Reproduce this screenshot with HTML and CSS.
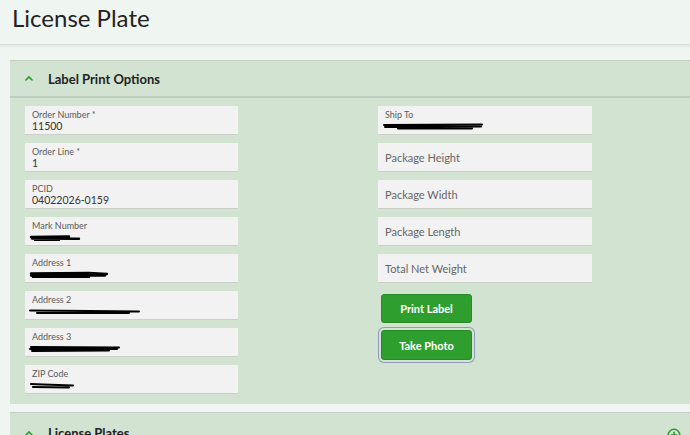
FILE: index.html
```html
<!DOCTYPE html>
<html lang="en">
<head>
    <meta charset="UTF-8">
    <meta name="viewport" content="width=device-width, initial-scale=1.0">
    <title>License Plate</title>
    <link rel="stylesheet" href="styles.css">
</head>
<body>
    <!-- Page header -->
    <header class="page-header">
        <h1>License Plate</h1>
    </header>

    <!-- Label print options -->
    <section class="panel">
        <div class="panel-header">
            <svg class="chevron" width="10" height="7" viewBox="0 0 10 7"><path d="M1.5 5.5 L5 2 L8.5 5.5" fill="none" stroke="#2a9a2a" stroke-width="1.6"/></svg>
            <span>Label Print Options</span>
        </div>
        <div class="panel-body">
            <div class="column">
                <div class="field">
                    <label>Order Number *</label>
                    <div class="value">11500</div>
                </div>
                <div class="field">
                    <label>Order Line *</label>
                    <div class="value">1</div>
                </div>
                <div class="field">
                    <label>PCID</label>
                    <div class="value">04022026-0159</div>
                </div>
                <div class="field">
                    <label>Mark Number</label>
                    <svg class="redact" width="56" height="7" viewBox="0 0 56 7"><path d="M2 3 L40 2.5 M3 4.5 L50 4.8 M6 6 L30 6" stroke="#000" stroke-width="2.4" stroke-linecap="round"/></svg>
                </div>
                <div class="field">
                    <label>Address 1</label>
                    <svg class="redact" width="82" height="7" viewBox="0 0 82 7"><path d="M2 2.5 L60 2 L78 3 M2 4.5 L76 4.5 M4 6 L60 6" stroke="#000" stroke-width="2.4" stroke-linecap="round"/></svg>
                </div>
                <div class="field">
                    <label>Address 2</label>
                    <svg class="redact" width="114" height="7" viewBox="0 0 114 7"><path d="M1 2.5 L60 3 L110 3.5 M8 5 L100 5" stroke="#000" stroke-width="2" stroke-linecap="round"/></svg>
                </div>
                <div class="field">
                    <label>Address 3</label>
                    <svg class="redact" width="94" height="7" viewBox="0 0 94 7"><path d="M2 2 L90 2.5 M1 4 L88 4 M3 6 L80 5.5" stroke="#000" stroke-width="2" stroke-linecap="round"/></svg>
                </div>
                <div class="field">
                    <label>ZIP Code</label>
                    <svg class="redact" width="48" height="7" viewBox="0 0 48 7"><path d="M2 2 L14 2.5 L44 3.5 M4 5 L40 5.5" stroke="#000" stroke-width="2.2" stroke-linecap="round"/></svg>
                </div>
            </div>

            <div class="column">
                <div class="field">
                    <label>Ship To</label>
                    <svg class="redact" width="104" height="7" viewBox="0 0 104 7"><path d="M2 2 L100 1.5 M3 4 L99 3.5 M16 5.5 L90 5.5" stroke="#000" stroke-width="2" stroke-linecap="round"/></svg>
                </div>
                <div class="field empty">Package Height</div>
                <div class="field empty">Package Width</div>
                <div class="field empty">Package Length</div>
                <div class="field empty">Total Net Weight</div>
                <div class="actions">
                    <button class="btn">Print Label</button>
                    <button class="btn focused">Take Photo</button>
                </div>
            </div>
        </div>
    </section>

    <!-- License plates -->
    <section class="panel">
        <div class="panel-header">
            <svg class="chevron" width="10" height="7" viewBox="0 0 10 7"><path d="M1.5 5.5 L5 2 L8.5 5.5" fill="none" stroke="#2a9a2a" stroke-width="1.6"/></svg>
            <span>License Plates</span>
            <svg class="add" width="14" height="14" viewBox="0 0 14 14"><circle cx="7" cy="7" r="5.8" fill="none" stroke="#2a9a2a" stroke-width="1.4"/><path d="M7 3.8 V10.2 M3.8 7 H10.2" stroke="#2a9a2a" stroke-width="1.6"/></svg>
        </div>
    </section>
</body>
</html>
```

FILE: styles.css
```css
/* Global */
body {
    margin: 0;
    font-family: 'Lato', 'Noto Sans', sans-serif;
    background: #eff5f1;
    color: #222;
    overflow: hidden;
}

/* Header */
.page-header {
    height: 44px;
    padding-left: 12px;
    border-bottom: 1px solid #d6dfd8;
    box-shadow: 0 2px 0 #e4ece6;
}

.page-header h1 {
    margin: 0;
    padding-top: 4px;
    font-size: 24px;
    font-weight: normal;
    line-height: 28px;
}

/* Panels */
.panel {
    margin: 15px 0 0 10px;
    background: #d2e3d1;
    border-top: 1px solid #c4cec4;
}

.panel + .panel {
    margin-top: 8px;
}

.panel-header {
    height: 35px;
    display: flex;
    align-items: center;
    padding-left: 14px;
    font-size: 13px;
    font-weight: bold;
    border-bottom: 2px solid #bfcfbf;
}

.panel + .panel .panel-header {
    height: 36px;
    border-bottom: none;
    align-items: flex-start;
    padding-top: 12px;
    box-sizing: border-box;
}

.panel + .panel .chevron {
    margin-top: 5px;
}

.chevron {
    margin-right: 14px;
}

.add {
    margin-left: auto;
    margin-right: 9px;
    margin-top: 3px;
}

.panel-body {
    display: grid;
    grid-template-columns: 213px 214px;
    column-gap: 140px;
    padding: 8px 0 10px 15px;
}

.column {
    display: flex;
    flex-direction: column;
    gap: 8px;
}

/* Fields */
.field {
    box-sizing: border-box;
    height: 29px;
    background: #f2f2f2;
    border-bottom: 1px solid #c8d0c8;
    padding: 3px 7px 0;
}

.field label {
    display: block;
    font-size: 9px;
    line-height: 11px;
    color: #5a5a5a;
}

.field .value {
    font-size: 10.5px;
    line-height: 13px;
    color: #333;
}

.field .redact {
    display: block;
    margin: 3px 0 0 -3px;
}

.field.empty {
    display: flex;
    align-items: center;
    padding-top: 0;
    font-size: 11px;
    color: #666;
}

/* Buttons */
.actions {
    display: flex;
    flex-direction: column;
    align-items: flex-start;
    gap: 7px;
    padding: 3px 0 0 3px;
}

.btn {
    width: 91px;
    height: 29px;
    background: #2e9f2e;
    border: 1px solid #268a26;
    border-radius: 3px;
    color: #fff;
    font-family: inherit;
    font-size: 11px;
    font-weight: bold;
}

.btn.focused {
    height: 30px;
    box-shadow: 0 0 0 2px #d2e3d1, 0 0 0 3px #8f9bb8;
}
```
